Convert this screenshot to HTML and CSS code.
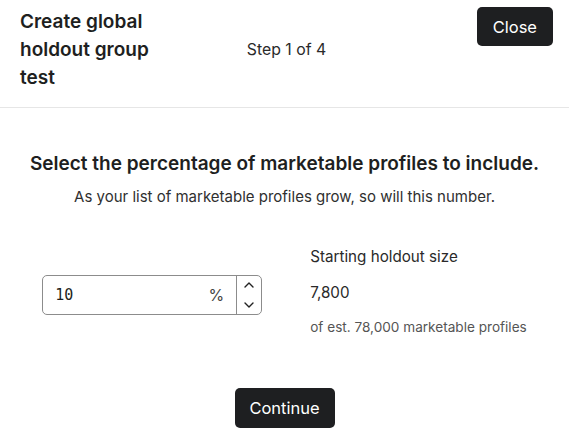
FILE: index.html
```html
<!DOCTYPE html>
<html lang="en">
<head>
<meta charset="utf-8">
<title>Create global holdout group test</title>
<link rel="stylesheet" href="styles.css">
</head>
<body>
<header class="header">
  <h1 class="title">Create global holdout group test</h1>
  <div class="step">Step 1 of 4</div>
  <div class="actions"><button class="btn" type="button">Close</button></div>
</header>
<main class="main">
  <h2 class="heading">Select the percentage of marketable profiles to include.</h2>
  <p class="sub">As your list of marketable profiles grow, so will this number.</p>
  <div class="row">
    <div class="field">
      <span class="value">10</span>
      <span class="unit">%</span>
      <div class="spin">
        <svg width="10" height="6" viewBox="0 0 10 6"><path d="M1 5 L5 1 L9 5" fill="none" stroke="#222" stroke-width="1.4" stroke-linecap="round" stroke-linejoin="round"/></svg>
        <svg width="10" height="6" viewBox="0 0 10 6"><path d="M1 1 L5 5 L9 1" fill="none" stroke="#222" stroke-width="1.4" stroke-linecap="round" stroke-linejoin="round"/></svg>
      </div>
    </div>
    <div class="stats">
      <div class="stat-label">Starting holdout size</div>
      <div class="stat-value">7,800</div>
      <div class="stat-note">of est. 78,000 marketable profiles</div>
    </div>
  </div>
  <div class="footer"><button class="btn" type="button">Continue</button></div>
</main>
</body>
</html>
```

FILE: styles.css
```css
* { box-sizing: border-box; }
html, body { margin: 0; padding: 0; background: #fff; }
body {
  font-family: Inter, "Noto Sans", "Liberation Sans", sans-serif;
  color: #1e1f21;
  width: 569px;
}
.header {
  display: grid;
  grid-template-columns: 1fr auto 1fr;
  align-items: center;
  padding: 7px 16px 16px 20px;
  border-bottom: 1px solid #e6e6e6;
  height: 108px;
}
.title {
  margin: 1px 0 0;
  font-size: 19px;
  line-height: 28px;
  font-weight: 600;
  max-width: 155px;
}
.step {
  font-size: 15.8px;
  line-height: 20px;
  color: #2a2a2a;
}
.actions {
  align-self: start;
  display: flex;
  justify-content: flex-end;
}
.btn {
  font-family: inherit;
  background: #1e1f21;
  color: #fff;
  border: none;
  border-radius: 5px;
  font-size: 16.5px;
  font-weight: 400;
  height: 39px;
  padding: 0 16px;
}
.main {
  display: flex;
  flex-direction: column;
  align-items: center;
  padding-top: 43px;
}
.heading {
  margin: 0;
  font-size: 19px;
  line-height: 26px;
  font-weight: 600;
}
.sub {
  margin: 10px 0 0;
  font-size: 15px;
  line-height: 20px;
  color: #2f2f2f;
}
.row {
  display: flex;
  align-items: center;
  gap: 48px;
  margin-top: 40px;
}
.field {
  width: 220px;
  height: 40px;
  border: 1px solid #8c8c8c;
  border-radius: 5px;
  display: flex;
  align-items: center;
  padding-left: 12px;
  margin-top: 7px;
}
.value {
  flex: 1;
  font-family: "DejaVu Sans Mono", "Liberation Mono", monospace;
  font-size: 15px;
  color: #1e1f21;
}
.unit {
  font-size: 16px;
  color: #444;
  margin-right: 12px;
}
.spin {
  width: 25px;
  height: 100%;
  border-left: 1px solid #8c8c8c;
  display: flex;
  flex-direction: column;
  align-items: center;
  justify-content: center;
  gap: 14px;
}
.spin svg { display: block; }
.stats {
  display: flex;
  flex-direction: column;
}
.stat-label { font-size: 15.2px; line-height: 20px; color: #2a2a2a; }
.stat-value { font-size: 15.2px; line-height: 20px; margin-top: 16px; color: #2a2a2a; }
.stat-note { font-size: 13.6px; line-height: 18px; margin-top: 15px; color: #555; }
.footer { margin-top: 52px; }
.footer .btn { width: 100px; height: 40px; padding: 0; }
```
